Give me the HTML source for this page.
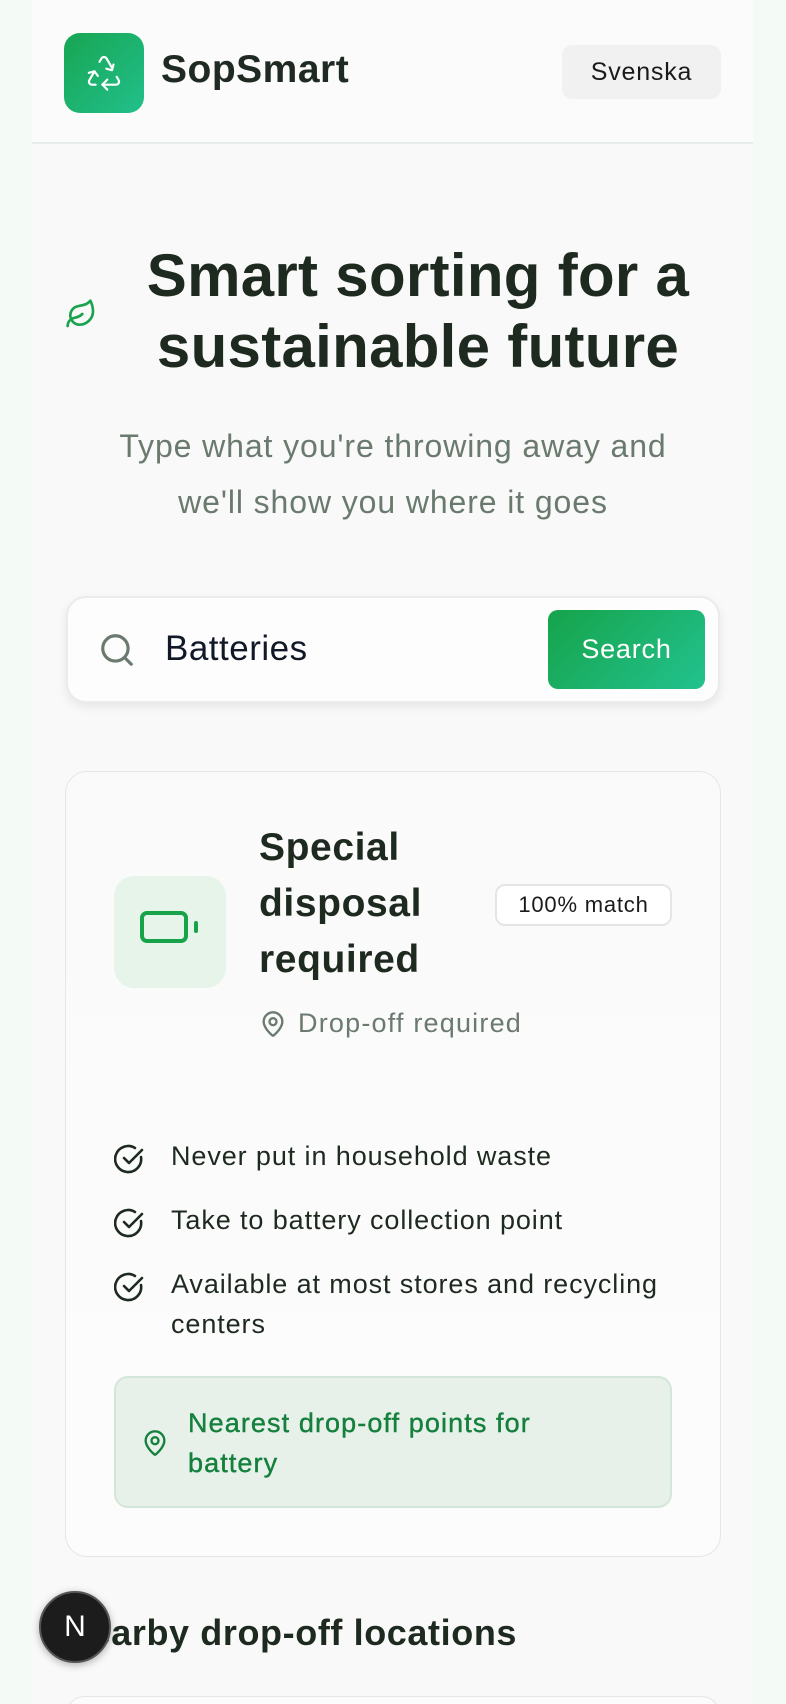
<!DOCTYPE html>
<html><head><meta charset="utf-8"><style>
*{box-sizing:border-box;margin:0;padding:0}
html,body{width:786px;height:1704px;overflow:hidden}
body{background:#f4faf5;font-family:"Liberation Sans",sans-serif;color:#1c2a20;position:relative}
.main{position:absolute;left:32px;top:0;width:721px;height:1704px;background:#f8f9f8}
.hdr{position:absolute;left:32px;top:0;width:721px;height:144px;background:#fbfbfb;border-bottom:2px solid #e8ece9}
.logo{position:absolute;left:64px;top:33px;width:80px;height:80px;border-radius:16px;background:linear-gradient(135deg,#17a552,#22c08c)}
.abs{position:absolute}
</style></head><body>
<div class="main"></div>
<div class="hdr"></div>
<div class="logo"><svg width="80" height="80" viewBox="0 0 24 24" fill="none" stroke="#fff" stroke-width="1.3" stroke-linecap="round" stroke-linejoin="round" style="transform:scale(.5);transform-origin:40px 40px">
<path d="M7 19H4.8a1.8 1.8 0 0 1-1.6-2.7l3.1-5.3"/><path d="M11 19h8.2a1.8 1.8 0 0 0 1.6-2.7l-1.2-2"/><path d="m14 16-3 3 3 3"/><path d="M8.3 13.7 6.3 11l-3.4.9"/><path d="m9.3 5.3 1.1-1.9a1.8 1.8 0 0 1 3.2 0l3.1 5.3"/><path d="m13.4 9.4 3.4.9.9-3.4"/></svg></div>
<div class="abs" style="left:161px;top:48px;font-size:39px;font-weight:bold;color:#1f2a22;letter-spacing:0.5px">SopSmart</div>
<div class="abs" style="left:562px;top:45px;width:159px;height:54px;border-radius:10px;background:#f0f1f0;font-size:25px;text-align:center;line-height:54px;color:#1a1a1a;letter-spacing:0.8px">Svenska</div>

<svg class="abs" style="left:64px;top:298px" width="34" height="32" viewBox="0 0 24 24" fill="none" stroke="#1aa34f" stroke-width="2" stroke-linecap="round" stroke-linejoin="round"><path d="M11 20A7 7 0 0 1 9.8 6.1C15.5 5 17 4.5 19 2c1 2 2 4.2 2 8 0 5.5-4.8 10-10 10Z"/><path d="M2 21c0-3 1.9-5.4 5.2-6.1C9.5 14.4 12 13 13 12"/></svg>
<div class="abs" style="left:100px;top:240px;width:636px;text-align:center;font-size:60px;font-weight:bold;line-height:71px;color:#1e2a20;letter-spacing:0.3px">Smart sorting for a sustainable future</div>
<div class="abs" style="left:78px;top:418px;width:630px;text-align:center;font-size:32px;line-height:56px;color:#6b7a6e;letter-spacing:0.9px">Type what you're throwing away and<br>we'll show you where it goes</div>

<div class="abs" style="left:66px;top:596px;width:654px;height:107px;border-radius:20px;background:#fdfdfd;border:2px solid #eaecea;box-shadow:0 4px 10px rgba(0,0,0,.08)"></div>
<svg class="abs" style="left:98px;top:631px" width="38" height="38" viewBox="0 0 24 24" fill="none" stroke="#6b7a6e" stroke-width="2" stroke-linecap="round"><circle cx="11" cy="11" r="8"/><path d="m21 21-4.3-4.3"/></svg>
<div class="abs" style="left:165px;top:629px;font-size:35px;color:#111827;letter-spacing:0.5px">Batteries</div>
<div class="abs" style="left:548px;top:610px;width:157px;height:79px;border-radius:10px;background:linear-gradient(135deg,#16a34a,#22c28f);color:#fff;font-size:27px;text-align:center;line-height:79px;letter-spacing:0.8px">Search</div>

<div class="abs" style="left:65px;top:771px;width:656px;height:786px;border-radius:22px;border:1.5px solid #e4e7e4;background:linear-gradient(180deg,#fafafa,#fcfcfc)"></div>
<div class="abs" style="left:114px;top:876px;width:112px;height:112px;border-radius:20px;background:#e6f4ea"></div>
<svg class="abs" style="left:140px;top:910px" width="60" height="44" viewBox="0 0 60 44" fill="none" stroke="#16a34a" stroke-linecap="round"><rect x="2" y="3" width="44" height="28" rx="5" stroke-width="4"/><path d="M56 13v8" stroke-width="4"/></svg>
<div class="abs" style="left:259px;top:820px;font-size:39px;font-weight:bold;line-height:56px;color:#1e2a20;letter-spacing:0.6px">Special<br>disposal<br>required</div>
<div class="abs" style="left:495px;top:884px;width:177px;height:42px;border-radius:10px;border:2px solid #e4e6e4;font-size:22px;text-align:center;line-height:38px;color:#1a1a1a;background:#fff;letter-spacing:0.8px">100% match</div>
<svg class="abs" style="left:259px;top:1009px" width="28" height="30" viewBox="0 0 24 24" fill="none" stroke="#6b7a6e" stroke-width="2" stroke-linecap="round" stroke-linejoin="round"><path d="M20 10c0 5-5.5 10.2-7.4 11.8a1 1 0 0 1-1.2 0C9.5 20.2 4 15 4 10a8 8 0 0 1 16 0"/><circle cx="12" cy="10" r="3"/></svg>
<div class="abs" style="left:298px;top:1008px;font-size:27px;color:#6b7a6e;letter-spacing:1.2px">Drop-off required</div>

<div class="abs" style="left:171px;top:1136px;width:530px;font-size:27px;line-height:40px;color:#1e2a20;letter-spacing:0.9px">
<div>Never put in household waste</div>
<div style="margin-top:24px">Take to battery collection point</div>
<div style="margin-top:24px">Available at most stores and recycling centers</div></div>
<svg class="abs" style="left:114px;top:1143px" width="32" height="180" viewBox="0 0 32 180" fill="none" stroke="#1e2a20" stroke-width="2.6" stroke-linecap="round" stroke-linejoin="round">
<g><path d="M27 14A13 13 0 1 1 21 5"/><path d="M10 15l5 5 13-13"/></g>
<g transform="translate(0,64)"><path d="M27 14A13 13 0 1 1 21 5"/><path d="M10 15l5 5 13-13"/></g>
<g transform="translate(0,128)"><path d="M27 14A13 13 0 1 1 21 5"/><path d="M10 15l5 5 13-13"/></g></svg>

<div class="abs" style="left:114px;top:1376px;width:558px;height:132px;border-radius:14px;background:#e7f1ea;border:2px solid #d3e6d9"></div>
<svg class="abs" style="left:141px;top:1428px" width="28" height="30" viewBox="0 0 24 24" fill="none" stroke="#15803d" stroke-width="2" stroke-linecap="round" stroke-linejoin="round"><path d="M20 10c0 5-5.5 10.2-7.4 11.8a1 1 0 0 1-1.2 0C9.5 20.2 4 15 4 10a8 8 0 0 1 16 0"/><circle cx="12" cy="10" r="3"/></svg>
<div class="abs" style="left:188px;top:1403px;font-size:27px;line-height:40px;color:#15803d;letter-spacing:1.1px;-webkit-text-stroke:0.4px #15803d">Nearest drop-off points for<br>battery</div>

<div class="abs" style="left:64px;top:1612px;font-size:36px;font-weight:bold;color:#1e2a20;letter-spacing:0.6px">Nearby drop-off locations</div>
<div class="abs" style="left:39px;top:1591px;width:72px;height:72px;border-radius:50%;background:#1c1c1c;border:2px solid #555;color:#fff;font-size:30px;text-align:center;line-height:68px;box-shadow:0 2px 8px rgba(0,0,0,.3)">N</div>
<div class="abs" style="left:65px;top:1696px;width:656px;height:40px;border-radius:22px;border:1.5px solid #e4e7e4;background:#fcfcfc"></div>
</body></html>
